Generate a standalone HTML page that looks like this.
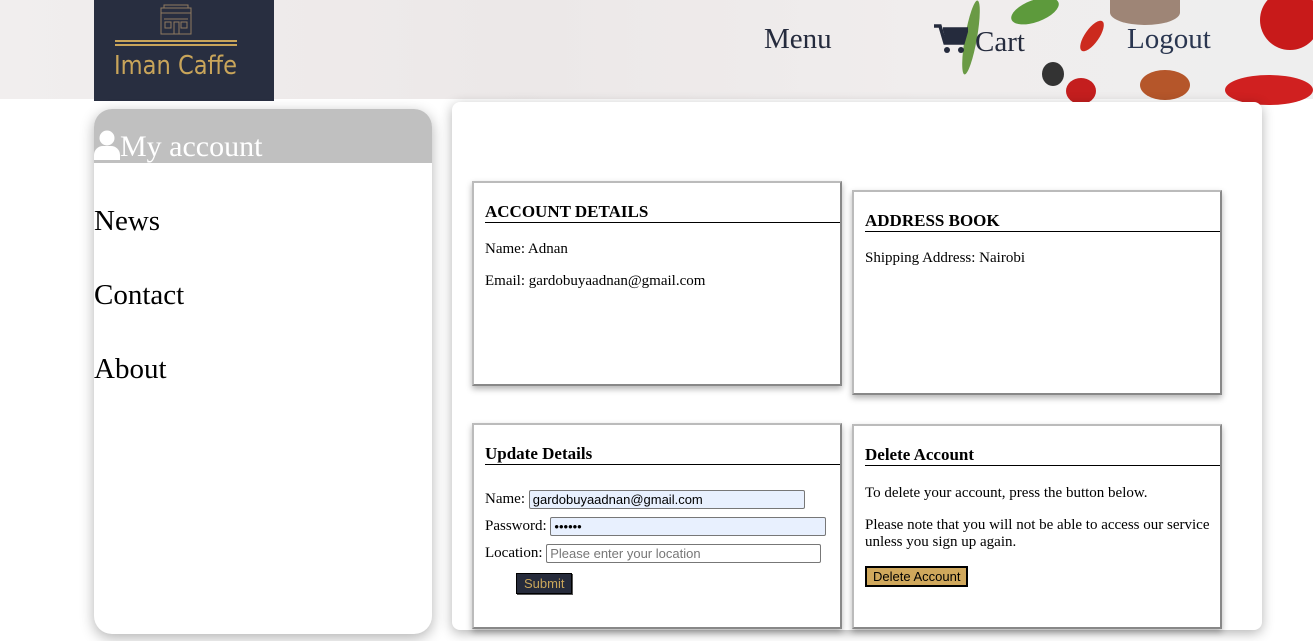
<!DOCTYPE html>
<html><head><style>
body{margin:0;width:1313px;height:641px;background:#fff;font-family:"Liberation Serif",serif;position:relative;overflow:hidden}
.hdr{position:absolute;left:0;top:0;width:1313px;height:99px;background:linear-gradient(90deg,#f1eeee,#ece8e8 40%,#f0eded 70%,#eee 100%)}
.blob{position:absolute;border-radius:50%}
.logo{position:absolute;left:94px;top:0;width:180px;height:101px;background:#282e40}
.nav{position:absolute;top:23px;font-size:29px;color:#252b3d}
.side{position:absolute;left:94px;top:109px;width:338px;height:525px;background:#fff;border-radius:18px;box-shadow:0 4px 14px rgba(0,0,0,.3);overflow:hidden}
.side .h{height:54px;background:#c0c0c0;color:#fff;font-size:30px;position:relative}
.side a{position:absolute;left:0;font-size:29px;color:#000}
.main{position:absolute;left:452px;top:102px;width:810px;height:528px;background:#fff;border-radius:8px;box-shadow:0 3px 12px rgba(0,0,0,.3)}
.box{position:absolute;width:370px;border:2px solid #999;border-color:#bbb #888 #888 #bbb;box-shadow:0 3px 6px rgba(0,0,0,.3);background:#fff;font-size:15px;box-sizing:border-box;line-height:17px}
.box h3{margin:19px 0 0 11px;font-size:17px;line-height:20px;border-bottom:1px solid #000;padding-bottom:0}
.box p{margin:0 0 0 11px}
input{font-family:"Liberation Sans",sans-serif;font-size:13px;height:19px;box-sizing:border-box;border:1px solid #777;border-radius:2px;padding:0 3px;vertical-align:middle}
</style></head><body>
<div class="hdr">
<div class="blob" style="left:1110px;top:0;width:70px;height:25px;background:#8a6a58;border-radius:0 0 50% 50%;opacity:.8"></div>
<div class="blob" style="left:1260px;top:-10px;width:60px;height:60px;background:#c81a1a"></div>
<div class="blob" style="left:1225px;top:75px;width:88px;height:30px;background:#d02020"></div>
<div class="blob" style="left:1010px;top:0;width:50px;height:22px;background:#5d9a3c;transform:rotate(-20deg)"></div>
<div class="blob" style="left:1085px;top:18px;width:14px;height:36px;background:#cc2a1e;transform:rotate(35deg)"></div>
<div class="blob" style="left:1042px;top:62px;width:22px;height:24px;background:#333"></div>
<div class="blob" style="left:1066px;top:78px;width:30px;height:26px;background:#c41e1e"></div>
<div class="blob" style="left:1140px;top:70px;width:50px;height:30px;background:#b5562a"></div>
<div class="blob" style="left:965px;top:0;width:12px;height:75px;background:#6a9a45;transform:rotate(10deg)"></div>
</div>
<div class="logo">
<svg width="180" height="101" viewBox="0 0 180 101"><g fill="none" stroke="#8f7a60" stroke-width="1"><rect x="67" y="8" width="30" height="26"/><path d="M67 13h30M70 8v-3h24v3M70 19h24"/><path d="M71 22h6v6h-6zM80 22h5v12h-5zM87 22h6v6h-6z"/></g><path d="M21 41h122M21 45h122" stroke="#c9a55a" stroke-width="2"/><text x="20" y="74" fill="#c9a55a" font-family="DejaVu Sans Condensed,Liberation Sans Narrow,sans-serif" font-size="26" textLength="123" lengthAdjust="spacingAndGlyphs">Iman Caffe</text></svg>
</div>
<div class="nav" style="left:764px">Menu</div>
<div class="nav" style="left:934px"><svg width="34" height="30" viewBox="0 0 34 30" style="vertical-align:-2px;margin-right:7px"><path d="M0 3h6l5 17h18l4-14H9" fill="none" stroke="#252b3d" stroke-width="3.5"/><path d="M9 6h24l-4 14H12z" fill="#252b3d"/><circle cx="13" cy="27" r="3" fill="#252b3d"/><circle cx="27" cy="27" r="3" fill="#252b3d"/></svg>Cart</div>
<div class="nav" style="left:1127px;color:#2a3650">Logout</div>
<div class="side"><div class="h"><svg width="26" height="30" viewBox="0 0 26 30" style="position:absolute;left:0;top:21px"><circle cx="13" cy="8" r="7.5" fill="#fff"/><path d="M0 30v-5a9 9 0 0 1 9-9h8a9 9 0 0 1 9 9v5z" fill="#fff"/></svg><span style="position:absolute;left:26px;top:21px">My account</span></div>
<a style="top:96px">News</a><a style="top:170px">Contact</a><a style="top:244px">About</a></div>
<div class="main"></div>
<div class="box" style="left:472px;top:181px;height:205px"><h3>ACCOUNT DETAILS</h3><p style="margin-top:18px">Name: Adnan</p><p style="margin-top:15px">Email: gardobuyaadnan@gmail.com</p></div>
<div class="box" style="left:852px;top:190px;height:205px"><h3>ADDRESS BOOK</h3><p style="margin-top:18px">Shipping Address: Nairobi</p></div>
<div class="box" style="left:472px;top:423px;height:206px"><h3>Update Details</h3>
<p style="margin-top:25px">Name: <input style="width:276px;background:#e8f0fe" value="gardobuyaadnan@gmail.com"></p>
<p style="margin-top:8px">Password: <input style="width:276px;background:#e8f0fe" value="••••••"></p>
<p style="margin-top:8px">Location: <input style="width:275px;color:#777" value="Please enter your location"></p>
<p style="margin:10px 0 0 42px"><span style="display:inline-block;background:#262b3b;color:#c9a55a;font-family:Liberation Sans,sans-serif;font-size:13px;line-height:15px;padding:2px 7px;border:1px solid #000;box-shadow:1px 1px 0 #555">Submit</span></p></div>
<div class="box" style="left:852px;top:424px;height:205px"><h3>Delete Account</h3><p style="margin-top:19px">To delete your account, press the button below.</p><p style="margin-top:15px">Please note that you will not be able to access our service unless you sign up again.</p>
<p style="margin-top:15px"><span style="display:inline-block;background:#d0a85c;color:#000;font-family:Liberation Sans,sans-serif;font-size:13px;line-height:15px;padding:1px 6px;border:2px solid #000">Delete Account</span></p></div>
</body></html>
